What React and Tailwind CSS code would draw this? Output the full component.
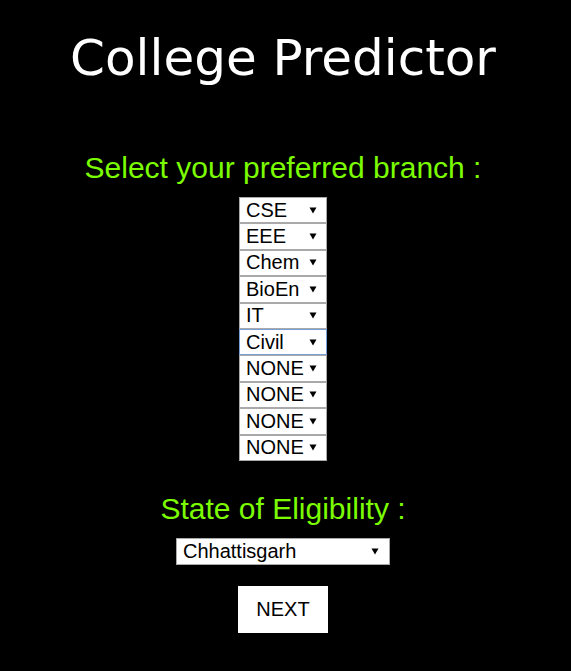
import { useState } from 'react';

const branches = ['CSE', 'EEE', 'Chem', 'BioEn', 'IT', 'Civil', 'NONE', 'NONE', 'NONE', 'NONE'];
const options = ['NONE', 'CSE', 'EEE', 'Chem', 'BioEn', 'IT', 'Civil', 'Mech', 'ECE'];

function Arrow() {
  return (
    <svg width="8" height="7" viewBox="0 0 8 7" className="block">
      <path d="M0.5 0.5 L7.5 0.5 L4 6.5 Z" fill="#000" />
    </svg>
  );
}

function Dropdown({ value, onChange, items, width, focused }) {
  return (
    <div className="relative" style={{ width }}>
      <select
        value={value}
        onChange={(e) => onChange(e.target.value)}
        className={`block w-full h-[26.4px] appearance-none bg-white text-black text-[20px] leading-[23px] pl-[6px] pr-5 border outline-none rounded-none ${
          focused ? 'border-[#7a9fd8]' : 'border-[#a9a9a9]'
        }`}
        style={{ fontFamily: '"Liberation Sans", Arial, sans-serif' }}
      >
        {items.map((o, i) => (
          <option key={i} value={o}>
            {o}
          </option>
        ))}
      </select>
      <span className="pointer-events-none absolute right-[10px] top-0 h-full flex items-center">
        <Arrow />
      </span>
    </div>
  );
}

export default function App() {
  const [picks, setPicks] = useState(branches);
  const [state, setState] = useState('Chhattisgarh');

  const setPick = (i, v) => {
    const next = [...picks];
    next[i] = v;
    setPicks(next);
  };

  return (
    <div
      className="min-h-screen w-full bg-black flex flex-col items-center pr-[5px]"
      style={{ fontFamily: '"Liberation Sans", Arial, sans-serif' }}
    >
      <h1
        className="mt-[33px] text-white text-[50px] leading-[50px] font-normal"
        style={{ fontFamily: '"DejaVu Sans", Verdana, sans-serif' }}
      >
        College Predictor
      </h1>

      <h2 className="mt-[70px] text-[#7cfc00] text-[30px] leading-[30px]">Select your preferred branch :</h2>

      <div className="mt-[14px] flex flex-col">
        {picks.map((b, i) => (
          <Dropdown
            key={i}
            value={b}
            onChange={(v) => setPick(i, v)}
            items={options}
            width="88px"
            focused={i === 5}
          />
        ))}
      </div>

      <h2 className="mt-[33px] text-[#7cfc00] text-[30px] leading-[30px]">State of Eligibility :</h2>

      <div className="mt-[14px]">
        <div className="relative w-[214px]">
          <select
            value={state}
            onChange={(e) => setState(e.target.value)}
            className="block w-full h-[27px] appearance-none bg-white text-black text-[20px] leading-[23px] pl-[6px] pr-6 border border-[#a9a9a9] outline-none rounded-none"
          >
            <option>Andhra Pradesh</option>
            <option>Chhattisgarh</option>
            <option>Madhya Pradesh</option>
            <option>Maharashtra</option>
            <option>Odisha</option>
          </select>
          <span className="pointer-events-none absolute right-[11px] top-0 h-full flex items-center">
            <Arrow />
          </span>
        </div>
      </div>

      <button className="mt-[21px] w-[90px] h-[47px] bg-white text-black text-[20px]">NEXT</button>
    </div>
  );
}
